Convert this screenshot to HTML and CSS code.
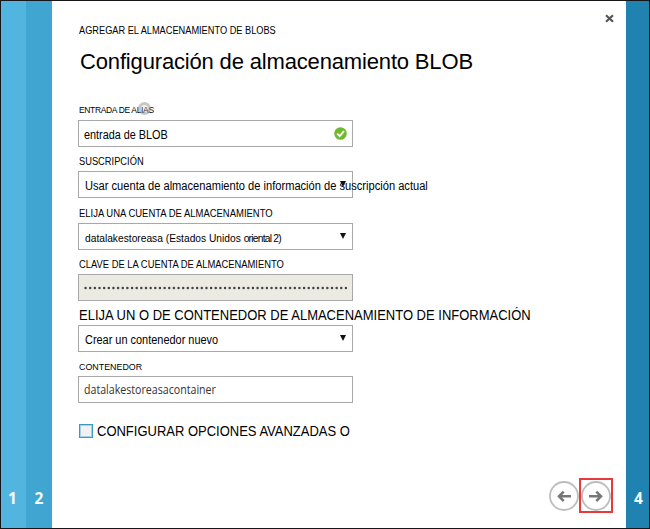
FILE: index.html
```html
<!DOCTYPE html>
<html lang="es">
<head>
<meta charset="utf-8">
<title>Configuración de almacenamiento BLOB</title>
<link rel="stylesheet" href="styles.css">
</head>
<body>
<div class="wizard">
  <div class="step step-one">1</div>
  <div class="step step-two">2</div>
  <main class="panel">
    <svg class="close" width="9" height="9" viewBox="0 0 9 9"><path d="M1 1.2L8 7.8M8 1.2L1 7.8"/></svg>
    <div class="subhead"><span>AGREGAR EL ALMACENAMIENTO DE BLOBS</span></div>
    <h1>Configuración de almacenamiento BLOB</h1>
    <form class="form">
      <div class="label l-alias"><i class="help"></i><span>ENTRADA DE ALIAS</span></div>
      <div class="field"><span class="v-alias">entrada de BLOB</span>
        <svg class="ok" width="13" height="13" viewBox="0 0 13 13"><circle cx="6.5" cy="6.5" r="6.3"/><path d="M3.2 6.6L5.7 9.1L10 4"/></svg></div>
      <div class="label l-sub"><span>SUSCRIPCIÓN</span></div>
      <div class="field"><span class="v-sub">Usar cuenta de almacenamiento de información de suscripción actual</span><i class="arrow"></i></div>
      <div class="label l-account"><span>ELIJA UNA CUENTA DE ALMACENAMIENTO</span></div>
      <div class="field"><span class="v-account">datalakestoreasa (Estados Unidos <b>oriental 2)</b></span><i class="arrow"></i></div>
      <div class="label l-key"><span>CLAVE DE LA CUENTA DE ALMACENAMIENTO</span></div>
      <div class="field disabled"><svg class="dots" width="264" height="4"><path d="M1.5 2H262.5"/></svg></div>
      <div class="label l-choose"><span>ELIJA UN O DE CONTENEDOR DE ALMACENAMIENTO DE INFORMACIÓN</span></div>
      <div class="field"><span class="v-new">Crear un contenedor nuevo</span><i class="arrow"></i></div>
      <div class="label l-container"><span>CONTENEDOR</span></div>
      <div class="field"><span class="v-container">datalakestoreasacontainer</span></div>
      <div class="check"><i class="box"></i><span>CONFIGURAR OPCIONES AVANZADAS O</span></div>
    </form>
    <div class="nav">
      <div class="btn"><svg width="30" height="30" viewBox="0 0 30 30"><circle cx="15" cy="15" r="14"/><path d="M22 15.3H10M14.7 10.6L10 15.3L14.7 20"/></svg></div>
      <div class="btn next"><svg width="30" height="30" viewBox="0 0 30 30"><circle cx="15" cy="15" r="14"/><path d="M8 15.3H20M15.3 10.6L20 15.3L15.3 20"/></svg></div>
    </div>
  </main>
  <div class="step step-four">4</div>
</div>
</body>
</html>
```
FILE: styles.css
```css
* { box-sizing: border-box; }
body { margin: 0; font-family: "Liberation Sans", Arial, sans-serif; color: #000; }
.wizard { display: flex; width: 650px; height: 529px; border: 1px solid #16161a; background: #fff; }
.step { display: flex; align-items: flex-end; justify-content: center; padding-bottom: 20px; color: #f4fbff; font: bold 15.5px/20px "Open Sans", "Noto Sans", sans-serif; }
.step-one { width: 25px; padding-right: 2px; background: #52b5e0; }
.step-two { width: 26px; background: #41a5d1; }
.step-four { width: 23px; padding-left: 2px; background: #1f82b0; }
.panel { position: relative; flex: 1; padding-left: 26px; white-space: nowrap; }
.close { position: absolute; top: 13px; left: 553px; stroke: #555; stroke-width: 2.2; fill: none; }

/* condensed lettering */
.subhead span, .label span, .field span, .check span { display: block; transform-origin: left center; }
.subhead span { transform: scaleX(.922); }
.l-sub span { transform: scaleX(.93); }
.l-account span { transform: scaleX(.946); }
.l-key span { transform: scaleX(.938); }
.l-choose span, .check span { transform: scaleX(.928); }
.l-container span { transform: scaleX(.935); }

.subhead { height: 37px; padding: 23px 0 0 1px; font-size: 10px; line-height: 13px; }
h1 { height: 58px; margin: 0; padding: 10px 0 0 2px; font-weight: normal; font-size: 22px; line-height: 27px; letter-spacing: -0.16px; }
.form { display: block; width: 275px; margin: 0; }
.label { display: flex; position: relative; height: 24px; padding: 9px 0 0 1px; font-size: 10px; line-height: 12px; }
.l-alias { font-size: 8.5px; letter-spacing: -0.35px; padding-top: 8px; }
.l-account { height: 25px; padding-top: 10px; }
.l-choose { padding-top: 5px; font-size: 14px; line-height: 18px; }
.l-container { font-size: 9.5px; padding-top: 9px; }
.help { position: absolute; left: 60px; top: 6px; width: 13px; height: 13px; border: 3px solid rgba(130, 130, 130, .38); border-radius: 50%; background: rgba(190, 190, 190, .2); }
.field { display: flex; position: relative; width: 275px; height: 27px; padding: 3px 6px 0 6px; border: 1px solid #a8a8a8; background: #fff; font-size: 12px; line-height: 23px; }
.field.disabled { background: #ebebe3; align-items: center; padding: 1px 5px 0; }
.field .v-alias { margin-left: -1px; transform: scaleX(.903); }
.field .v-sub { transform: scaleX(.926); }
.field .v-account { font-size: 11px; transform: scaleX(.93); }
.v-account b { font-weight: normal; letter-spacing: -0.8px; }
.field .v-new { transform: scaleX(.911); }
.field .v-container { margin-left: -1px; margin-top: -2px; font-family: "Open Sans", "Noto Sans", sans-serif; color: #333; transform: scaleX(.886); }
.arrow { position: absolute; right: 6px; top: 9px; border-left: 3px solid transparent; border-right: 3px solid transparent; border-top: 6px solid #111; }
.ok { position: absolute; right: 5px; top: 6px; fill: #6fba2c; }
.ok path { stroke: #fff; stroke-width: 1.9; fill: none; }
.dots path { stroke: #444; stroke-width: 2.4; stroke-linecap: round; stroke-dasharray: 0.1 4.55; }
.check { display: flex; align-items: center; gap: 4px; margin-top: 19px; height: 18px; padding-left: 1px; font-size: 14px; }
.box { flex: none; width: 14px; height: 14px; border: 1px solid #3d96c6; box-shadow: inset 0 0 0 1px #a9d0e6; background: #f1f1f1; }
.nav { display: flex; position: absolute; left: 496px; top: 477px; }
.btn { display: flex; width: 32px; height: 35px; padding: 3px 0 0 1px; fill: none; }
.btn circle { stroke: #bdbdbd; stroke-width: 1.8; }
.btn path { stroke: #777; stroke-width: 2.5; }
.next { width: 34px; margin-left: -1px; padding: 1px 0 0 0; border: 2px solid #e83a3a; }
```
